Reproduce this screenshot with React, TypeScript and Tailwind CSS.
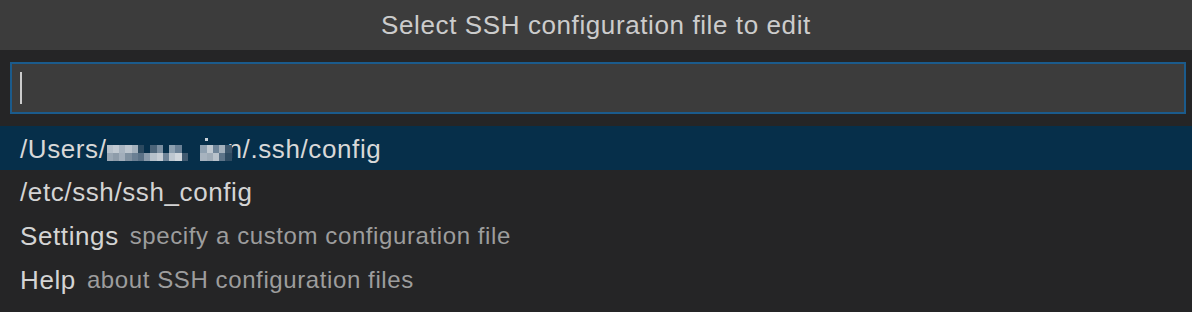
const mosaic: [string, string][] = [
  ['#b6c0ca', '#9aa7b4'],
  ['#c2cad2', '#8e9caa'],
  ['#a8b4c0', '#a2aebb'],
  ['#bcc5ce', '#7f90a0'],
  ['#a4b1bd', '#6a7f93'],
  ['#2c4a60', '#5a7186'],
  ['transparent', '#8a9bab'],
  ['#4b6479', '#b5c0ca'],
  ['#7b8fa1', '#c5cdd5'],
  ['transparent', '#6d8397'],
  ['#8da0b0', '#bdc7d0'],
  ['#6a8196', '#cfd6dc'],
  ['transparent', '#405a70'],
  ['transparent', 'transparent'],
  ['transparent', 'transparent'],
  ['#8fa1b1', '#a7b3bf'],
  ['#c0c9d1', '#9eabb7'],
  ['#6f8599', '#b8c2cb'],
  ['#a4b1bd', '#5d7489'],
  ['#3d576d', '#2e4b62'],
]

function Mosaic() {
  return (
    <span className="relative inline-flex items-end h-[26px] w-[125px] self-center">
      {mosaic.map(([top, bottom], i) => (
        <span key={i} className="flex flex-col w-[6.25px] mb-[1px]">
          <span className="h-[8px]" style={{ backgroundColor: top }}></span>
          <span className="h-[8px]" style={{ backgroundColor: bottom }}></span>
        </span>
      ))}
      {/* stray dot left from the blurred "i" */}
      <span className="absolute left-[98px] top-[2px] w-[3px] h-[3px] bg-[#c9d1d8]"></span>
    </span>
  )
}

export default function App() {
  const items = [
    { label: '/etc/ssh/ssh_config', desc: '' },
    { label: 'Settings', desc: 'specify a custom configuration file' },
    { label: 'Help', desc: 'about SSH configuration files' },
  ]

  return (
    <div className="w-[1192px] h-[312px] bg-[#252526] font-['Liberation_Sans',sans-serif] tracking-[0.6px] overflow-hidden">
      {/* Title */}
      <div className="h-[50px] bg-[#3c3c3c] flex items-center justify-center text-[26px] text-[#cccccc]">
        Select SSH configuration file to edit
      </div>

      {/* Input */}
      <div className="pl-[10px] pr-[6px] py-[12px]">
        <div className="h-[52px] bg-[#3c3c3c] border-2 border-[#1b5b8c] flex items-center pl-[8px]">
          <span className="w-[2px] h-[32px] bg-[#cccccc]"></span>
        </div>
      </div>

      {/* List */}
      <div>
        <div className="h-[44px] flex items-center px-[20px] pt-[2px] text-[26px] bg-[#062f4a] text-[#d8d8d8]">
          <span>/Users/</span>
          <Mosaic />
          <span className="-ml-[4px]">n/.ssh/config</span>
        </div>
        {items.map((it, i) => (
          <div key={i} className="h-[44px] flex items-center px-[20px] gap-[11px] text-[26px] text-[#d4d4d4]">
            <span>{it.label}</span>
            {it.desc && <span className="text-[#9d9d9d] text-[24px]">{it.desc}</span>}
          </div>
        ))}
      </div>
    </div>
  )
}
